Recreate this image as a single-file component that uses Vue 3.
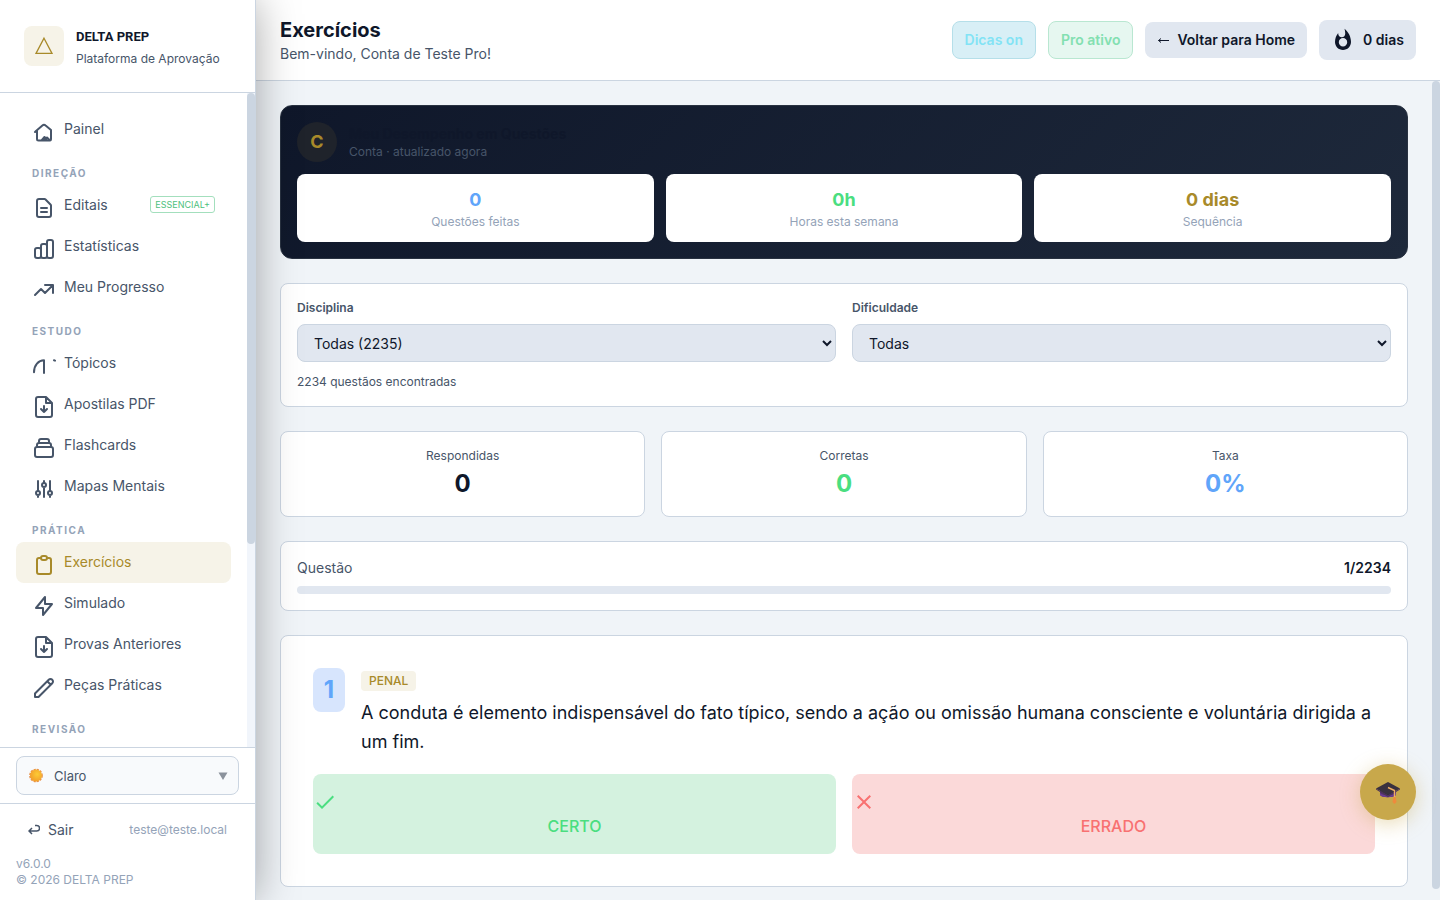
<script setup>
const icons = {
  home: 'M3 12l1-1m0 0l6.4-5.5a2.4 2.4 0 013.2 0L19 10v9a1.500 1.500 0 01-1.500 1.500h-11A1.500 1.500 0 015 19v-8M9.500 20.500l3-3.500 1.500 1.500 1-1 3 3m-6-2v1m2-1v1',
  doc: 'M9 12h6m-6 4h6m2 5H7a2 2 0 01-2-2V5a2 2 0 012-2h5.586a1 1 0 01.707.293l5.414 5.414a1 1 0 01.293.707V19a2 2 0 01-2 2z',
  bars: 'M9 19v-6a2 2 0 00-2-2H5a2 2 0 00-2 2v6a2 2 0 002 2h2a2 2 0 002-2zm0 0V9a2 2 0 012-2h2a2 2 0 012 2v10m-6 0a2 2 0 002 2h2a2 2 0 002-2m0 0V5a2 2 0 012-2h2a2 2 0 012 2v14a2 2 0 01-2 2h-2a2 2 0 01-2-2z',
  trend: 'M13 7h8m0 0v8m0-8l-8 8-4-4-6 6',
  arc: 'M12 19V6.250C6.500 6.250 2 11 2 18.250M22 6.200l1 .400',
  download: 'M14 2H6a2 2 0 00-2 2v16a2 2 0 002 2h12a2 2 0 002-2V8zM14 2v6h6M12 11v6m-3-3l3 3 3-3',
  stack: 'M19 11H5m14 0a2 2 0 012 2v6a2 2 0 01-2 2H5a2 2 0 01-2-2v-6a2 2 0 012-2m14 0V9a2 2 0 00-2-2M5 11V9a2 2 0 012-2m0 0V5a2 2 0 012-2h6a2 2 0 012 2v2M7 7h10',
  sliders: 'M12 6V4m0 2a2 2 0 100 4m0-4a2 2 0 110 4m-6 8a2 2 0 100-4m0 4a2 2 0 110-4m0 4v2m0-6V4m6 6v10m6-2a2 2 0 100-4m0 4a2 2 0 110-4m0 4v2m0-6V4',
  clipboard: 'M9 5H7a2 2 0 00-2 2v12a2 2 0 002 2h10a2 2 0 002-2V7a2 2 0 00-2-2h-2M9 5a2 2 0 002 2h2a2 2 0 002-2M9 5a2 2 0 012-2h2a2 2 0 012 2',
  bolt: 'M13 10V3L4 14h7v7l9-11h-7z',
  pencil: 'M15.232 5.232l3.536 3.536m-2.036-5.036a2.500 2.500 0 113.536 3.536L6.500 21.036H3v-3.572L16.732 3.732z',
}

const sections = [
  { title: '', items: [{ label: 'Painel', icon: 'home' }] },
  {
    title: 'DIREÇÃO',
    items: [
      { label: 'Editais', icon: 'doc', tag: 'ESSENCIAL+' },
      { label: 'Estatísticas', icon: 'bars' },
      { label: 'Meu Progresso', icon: 'trend' },
    ],
  },
  {
    title: 'ESTUDO',
    items: [
      { label: 'Tópicos', icon: 'arc' },
      { label: 'Apostilas PDF', icon: 'download' },
      { label: 'Flashcards', icon: 'stack' },
      { label: 'Mapas Mentais', icon: 'sliders' },
    ],
  },
  {
    title: 'PRÁTICA',
    items: [
      { label: 'Exercícios', icon: 'clipboard', active: true },
      { label: 'Simulado', icon: 'bolt' },
      { label: 'Provas Anteriores', icon: 'download' },
      { label: 'Peças Práticas', icon: 'pencil' },
    ],
  },
  { title: 'REVISÃO', items: [] },
]

const summary = [
  { value: '0', label: 'Questões feitas', tone: 'blue' },
  { value: '0h', label: 'Horas esta semana', tone: 'green' },
  { value: '0 dias', label: 'Sequência', tone: 'gold' },
]

const results = [
  { value: '0', label: 'Respondidas', tone: 'ink' },
  { value: '0', label: 'Corretas', tone: 'green' },
  { value: '0%', label: 'Taxa', tone: 'blue' },
]
</script>

<template>
  <div class="app">
    <aside class="sidebar">
      <div class="brand">
        <div class="brand-mark">
          <svg width="20" height="20" viewBox="0 0 20 20" fill="none" stroke="currentColor" stroke-width="1.3">
            <path d="M10 2.200L18 17.400H2z" />
          </svg>
        </div>
        <div>
          <div class="brand-name">DELTA PREP</div>
          <div class="brand-sub">Plataforma de Aprovação</div>
        </div>
      </div>

      <div class="scroll-area">
        <nav class="nav">
          <div v-for="s in sections" :key="s.title">
            <div v-if="s.title" class="nav-title">{{ s.title }}</div>
            <a v-for="i in s.items" :key="i.label" href="#" class="nav-item" :class="{ active: i.active }">
              <svg class="nav-icon" viewBox="0 0 24 24" fill="none" stroke="currentColor" stroke-width="2" stroke-linecap="round" stroke-linejoin="round">
                <path :d="icons[i.icon]" />
              </svg>
              <span>{{ i.label }}</span>
              <span v-if="i.tag" class="nav-tag">{{ i.tag }}</span>
            </a>
          </div>
        </nav>
        <div class="rail" aria-hidden="true"><div class="thumb nav-thumb"></div></div>
      </div>

      <div class="theme">
        <button class="theme-button" type="button">
          <svg width="16" height="16" viewBox="0 0 16 16">
            <defs>
              <radialGradient id="sun" cx=".6" cy=".4" r=".6">
                <stop offset="0" stop-color="#fccb35" />
                <stop offset="1" stop-color="#f2a02b" />
              </radialGradient>
            </defs>
            <circle cx="8" cy="7.500" r="6.100" fill="none" stroke="#e8914a" stroke-width="1.500" stroke-dasharray="2.200 1" />
            <circle cx="8" cy="7.500" r="6" fill="url(#sun)" />
          </svg>
          <span>Claro</span>
          <svg class="caret" width="10" height="8" viewBox="0 0 10 8"><path d="M0.500 0.500h9L5 8z" fill="currentColor" /></svg>
        </button>
      </div>

      <div class="foot">
        <div class="foot-row">
          <button class="logout" type="button">
            <svg width="12" height="12" viewBox="0 0 12 12" fill="none" stroke="currentColor" stroke-width="1.500">
              <path d="M7 1.500h1.800a2.700 2.700 0 010 5.500H1M4 4l-3 3 3 3" />
            </svg>
            Sair
          </button>
          <span class="email">teste@teste.local</span>
        </div>
        <div class="version">v6.0.0<br />© 2026 DELTA PREP</div>
      </div>
    </aside>

    <div class="page">
      <header class="topbar">
        <div>
          <h1>Exercícios</h1>
          <p class="welcome">Bem-vindo, Conta de Teste Pro!</p>
        </div>
        <div class="actions">
          <button type="button" class="pill hints">Dicas on</button>
          <button type="button" class="pill pro">Pro ativo</button>
          <button type="button" class="pill back">
            <svg width="12" height="10" viewBox="0 0 12 10" fill="none" stroke="currentColor"><path d="M12 5.500H1.500M4 3.500l-2.500 2 2.500 2" /></svg>
            Voltar para Home
          </button>
          <div class="pill streak">
            <svg width="24" height="24" viewBox="0 0 24 24" fill="currentColor">
              <path d="M13.500.67s.74 2.650.74 4.800c0 2.060-1.350 3.730-3.410 3.730-2.070 0-3.630-1.670-3.630-3.730l.03-.36C5.210 7.510 4 10.620 4 14c0 4.420 3.580 8 8 8s8-3.580 8-8C20 8.610 17.410 3.800 13.500.67zM12 10.100a4.200 4.200 0 010 8.400 4.200 4.200 0 010-8.400z" />
            </svg>
            0 dias
          </div>
        </div>
      </header>

      <div class="scroll-area">
        <main class="content">
          <section class="hero">
            <div class="hero-head">
              <div class="avatar">C</div>
              <div>
                <div class="hero-title">Meu Desempenho em Questões</div>
                <div class="hero-sub">Conta · atualizado agora</div>
              </div>
            </div>
            <div class="summary">
              <div v-for="s in summary" :key="s.label" class="summary-card">
                <div class="summary-value" :class="s.tone">{{ s.value }}</div>
                <div class="summary-label">{{ s.label }}</div>
              </div>
            </div>
          </section>

          <section class="card">
            <div class="filters">
              <div>
                <label for="subject">Disciplina</label>
                <select id="subject"><option>Todas (2235)</option></select>
              </div>
              <div>
                <label for="level">Dificuldade</label>
                <select id="level"><option>Todas</option></select>
              </div>
            </div>
            <p class="found">2234 questãos encontradas</p>
          </section>

          <section class="results">
            <div v-for="r in results" :key="r.label" class="card result">
              <div class="result-label">{{ r.label }}</div>
              <div class="result-value" :class="r.tone">{{ r.value }}</div>
            </div>
          </section>

          <section class="card">
            <div class="progress-row">
              <span>Questão</span>
              <strong>1/2234</strong>
            </div>
            <div class="bar"></div>
          </section>

          <section class="card question">
            <div class="question-head">
              <div class="number">1</div>
              <div>
                <div class="tag-row"><span class="subject-tag">PENAL</span></div>
                <p class="statement">A conduta é elemento indispensável do fato típico, sendo a ação ou omissão humana consciente e voluntária dirigida a um fim.</p>
              </div>
            </div>
            <div class="answers">
              <button type="button" class="answer right">
                <svg width="24" height="24" viewBox="0 0 24 24" fill="currentColor"><path d="M9 16.170L4.830 12l-1.420 1.410L9 19 21 7l-1.410-1.410z" /></svg>
                <span>CERTO</span>
              </button>
              <button type="button" class="answer wrong">
                <svg width="24" height="24" viewBox="0 0 24 24" fill="currentColor"><path d="M19 6.410L17.590 5 12 10.590 6.410 5 5 6.410 10.590 12 5 17.590 6.410 19 12 13.410 17.590 19 19 17.590 13.410 12z" /></svg>
                <span>ERRADO</span>
              </button>
            </div>
          </section>
        </main>
        <div class="rail page-rail" aria-hidden="true"><div class="thumb page-thumb"></div></div>
      </div>
    </div>

    <button class="fab" type="button" aria-label="Tutor">
      <svg width="26" height="26" viewBox="0 0 26 26">
        <path d="M5 10v6c2 3 13 3 16 0v-6z" fill="#533070" />
        <path d="M5 14c3 3 12 3 16 0v2c-3 3-14 3-16 0z" fill="#6b3d91" />
        <path d="M1 9.500L13 3l12 6.500L13 16.500z" fill="#39313f" />
        <path d="M1 9.500L13 16.500 25 9.500v1L13 18 1 10.500z" fill="#4c3358" />
        <path d="M13 8.500l6.500 3v7.500" fill="none" stroke="#f1ae62" stroke-width="1.400" />
        <path d="M18.500 18h2l1 5-2 2-2-2z" fill="#ef8a3c" />
      </svg>
    </button>
  </div>
</template>

<style>
body {
  margin: 0;
}
</style>

<style scoped>
* {
  box-sizing: border-box;
}

.app {
  display: flex;
  height: 100vh;
  overflow: hidden;
  background: #f0f4f8;
  color: #0f172a;
  font-family: Inter, "Noto Sans", sans-serif;
  font-size: 14px;
  line-height: 20px;
}

button,
select {
  font: inherit;
  color: inherit;
}

button {
  border: 0;
  padding: 0;
  background: none;
}

h1,
p {
  margin: 0;
}

svg {
  display: block;
  flex: none;
}

.scroll-area {
  display: flex;
  flex: 1;
  min-height: 0;
}

.rail {
  flex: none;
  width: 8px;
  background: #f1f5fb;
}

.page-rail {
  background: #f0f4f8;
}

.thumb {
  border-radius: 4px;
  background: #cbd5e1;
}

.nav-thumb {
  height: 69%;
}

.page-thumb {
  height: 98.6%;
}

.sidebar {
  position: relative;
  z-index: 2;
  display: flex;
  flex-direction: column;
  flex: none;
  width: 256px;
  background: #fff;
  border-right: 1px solid #cbd5e1;
  box-shadow: 0 0 40px rgba(0, 0, 0, 0.34);
}

.brand {
  display: flex;
  align-items: center;
  gap: 12px;
  height: 93px;
  padding: 0 24px;
  border-bottom: 1px solid #cbd5e1;
}

.brand-mark {
  display: grid;
  place-items: center;
  width: 40px;
  height: 40px;
  border-radius: 8px;
  background: #f6f3e8;
  color: #a88a2a;
}

.brand-name {
  padding-top: 2px;
  font-family: Roboto, "Liberation Sans", sans-serif;
  font-size: 13px;
  font-weight: 700;
  line-height: 24px;
}

.brand-sub {
  font-size: 12px;
  line-height: 20px;
  color: #475569;
}

.nav {
  flex: 1;
  min-width: 0;
  overflow-y: auto;
  scrollbar-width: none;
  padding: 16px 16px 308px;
}

.nav-title {
  padding: 16px 16px 4px;
  font-size: 10px;
  font-weight: 700;
  line-height: 15px;
  letter-spacing: 1.5px;
  color: #94a3b8;
}

.nav-item {
  display: flex;
  align-items: center;
  gap: 8px;
  height: 41px;
  padding: 0 16px 2px;
  border-radius: 8px;
  color: #475569;
  text-decoration: none;
}

.nav-item.active {
  background: #f6f3e8;
  color: #a88a2a;
}

.nav-icon {
  width: 24px;
  height: 24px;
  margin-top: 7px;
}

.nav-tag {
  margin-left: auto;
  padding: 0 4px;
  border: 1px solid #a3dfbd;
  border-radius: 3px;
  color: #4ebf7d;
  font-size: 9px;
  line-height: 15px;
}

.theme {
  padding: 8px 16px;
  border-top: 1px solid #cbd5e1;
  border-bottom: 1px solid #cbd5e1;
}

.theme-button {
  display: flex;
  align-items: center;
  gap: 10px;
  width: 100%;
  height: 39px;
  padding: 0 10px 0 11px;
  border: 1px solid #cbd5e1;
  border-radius: 8px;
  background: #f8fafc;
  color: #475569;
  font-size: 13px;
}

.caret {
  margin-left: auto;
  color: #8b929c;
}

.foot {
  padding: 16px 16px 12px;
}

.foot-row {
  display: flex;
  align-items: center;
  justify-content: space-between;
  padding: 0 12px;
}

.logout {
  display: flex;
  align-items: center;
  gap: 8px;
  color: #475569;
}

.email {
  font-size: 12px;
  color: #94a3b8;
}

.version {
  margin-top: 16px;
  font-size: 12px;
  line-height: 16px;
  color: #94a3b8;
}

.page {
  display: flex;
  flex-direction: column;
  flex: 1;
  min-width: 0;
}

.topbar {
  display: flex;
  align-items: center;
  justify-content: space-between;
  flex: none;
  height: 81px;
  padding: 0 24px;
  background: #fff;
  border-bottom: 1px solid #cbd5e1;
}

h1 {
  font-size: 20px;
  font-weight: 700;
  line-height: 28px;
}

.welcome {
  color: #475569;
}

.actions {
  display: flex;
  align-items: center;
  gap: 12px;
}

.pill {
  display: flex;
  align-items: center;
  gap: 8px;
  padding: 8px 12px;
  border-radius: 8px;
  background: #e1e7f0;
  font-weight: 600;
}

.pill.hints {
  border: 1px solid #b5dfe9;
  background: #d8eff6;
  color: #82e3f5;
}

.pill.pro {
  border: 1px solid #b9e7d1;
  background: #e6f7f0;
  color: #83e0b1;
}

.content {
  display: flex;
  flex-direction: column;
  gap: 24px;
  flex: 1;
  min-width: 0;
  overflow-y: auto;
  scrollbar-width: none;
  padding: 24px;
}

.content > * {
  flex: none;
}

.hero {
  padding: 16px;
  border: 1px solid #293241;
  border-radius: 12px;
  background: linear-gradient(135deg, #0f172a, #1e293b);
}

.hero-head {
  display: flex;
  align-items: center;
  gap: 12px;
}

.avatar {
  display: grid;
  place-items: center;
  width: 40px;
  height: 40px;
  border-radius: 50%;
  background: #1f232b;
  color: #a88a2a;
  font-size: 18px;
  font-weight: 700;
}

.hero-title {
  color: #0f172a;
  font-weight: 700;
}

.hero-sub {
  color: #475569;
  font-size: 12px;
  line-height: 16px;
}

.summary {
  display: grid;
  grid-template-columns: repeat(3, 1fr);
  gap: 12px;
  margin-top: 12px;
}

.summary-card {
  padding: 12px;
  border-radius: 8px;
  background: #fff;
  text-align: center;
}

.summary-value {
  font-size: 18px;
  font-weight: 700;
  line-height: 28px;
}

.summary-label {
  color: #94a3b8;
  font-size: 12px;
  line-height: 16px;
}

.ink {
  color: #0f172a;
}

.blue {
  color: #60a5fa;
}

.green {
  color: #4ade80;
}

.gold {
  color: #a88a2a;
}

.card {
  padding: 16px;
  border: 1px solid #cbd5e1;
  border-radius: 8px;
  background: #fff;
}

.filters {
  display: grid;
  grid-template-columns: 1fr 1fr;
  gap: 16px;
}

label {
  display: block;
  margin-bottom: 8px;
  color: #475569;
  font-size: 12px;
  font-weight: 600;
  line-height: 16px;
}

select {
  display: block;
  width: 100%;
  height: 38px;
  padding: 0 12px;
  border: 1px solid #cbd5e1;
  border-radius: 8px;
  background: #e1e7f0;
}

.found {
  margin-top: 12px;
  color: #475569;
  font-size: 12px;
  line-height: 16px;
}

.results {
  display: grid;
  grid-template-columns: repeat(3, 1fr);
  gap: 16px;
}

.result {
  text-align: center;
}

.result-label {
  color: #475569;
  font-size: 12px;
  line-height: 16px;
}

.result-value {
  margin-top: 4px;
  font-size: 24px;
  font-weight: 700;
  line-height: 32px;
}

.progress-row {
  display: flex;
  justify-content: space-between;
  color: #475569;
}

.progress-row strong {
  color: #0f172a;
  font-weight: 600;
}

.bar {
  height: 8px;
  margin-top: 8px;
  border-radius: 4px;
  background: #e1e7f0;
}

.question {
  padding: 32px;
}

.question-head {
  display: flex;
  align-items: flex-start;
  gap: 16px;
}

.number {
  flex: none;
  width: 32px;
  border-radius: 8px;
  background: #d7e5fd;
  color: #60a5fa;
  font-size: 24px;
  font-weight: 700;
  line-height: 44px;
  text-align: center;
}

.tag-row {
  display: flex;
  padding: 3px 0 7px;
}

.subject-tag {
  padding: 0 8px;
  border-radius: 4px;
  background: #f6f3e8;
  color: #a88a2a;
  font-size: 12px;
  font-weight: 500;
  line-height: 20px;
}

.statement {
  font-size: 18px;
  line-height: 29px;
}

.answers {
  display: grid;
  grid-template-columns: 1fr 1fr;
  gap: 16px;
  margin-top: 18px;
}

.answer {
  padding: 16px 0;
  border-radius: 8px;
  font-size: 16px;
  font-weight: 500;
  line-height: 24px;
}

.answer.right {
  background: #d4f2df;
  color: #4ade80;
}

.answer.wrong {
  background: #fbd9d9;
  color: #f87171;
}

.fab {
  position: fixed;
  right: 24px;
  bottom: 80px;
  z-index: 3;
  display: grid;
  place-items: center;
  width: 56px;
  height: 56px;
  border-radius: 50%;
  background: #c8a84b;
  box-shadow: 0 4px 20px rgba(200, 168, 75, 0.4);
}
</style>
